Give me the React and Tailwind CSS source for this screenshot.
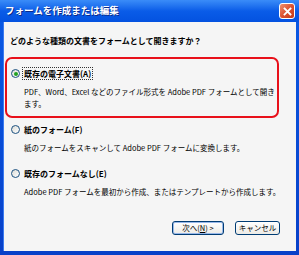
import React from 'react';

const font = { fontFamily: '"Noto Sans CJK JP", "Noto Sans", sans-serif' };

const Radio = ({ checked }) => (
  <span className="relative flex h-[9px] w-[9px] shrink-0 items-center justify-center rounded-full border border-[#1c5180] bg-gradient-to-br from-[#dcdcd6] to-white">
    {checked && <span className="h-[4px] w-[4px] rounded-full bg-[#21a121]" />}
  </span>
);

const Option = ({ label, desc, checked, focus }) => (
  <div className="flex flex-col">
    <div className="flex items-center gap-[3px]">
      <Radio checked={checked} />
      <span
        className={
          'text-[8px] font-bold leading-[11px] text-black px-[1px] ' +
          (focus ? 'outline outline-1 outline-dotted outline-[#333]' : '')
        }
      >
        {label}
      </span>
    </div>
    <div className="mt-[7px] pl-[13px] pr-[1px] text-[7.5px] leading-[12px] text-black">{desc}</div>
  </div>
);

const App = () => {
  return (
    <div style={font} className="flex h-[255px] w-[299px] flex-col bg-gradient-to-b from-[#0a5ae6] to-[#0840c8]">
      {/* title bar */}
      <div className="flex h-[22px] shrink-0 items-center justify-between bg-gradient-to-b from-[#3a8cf8] via-[#0a5ce8] to-[#0452e0] pl-[5px] pr-[4px]">
        <span className="text-[9.5px] font-bold leading-none text-white [text-shadow:1px_1px_0_#0a2a8a]">
          フォームを作成または編集
        </span>
        <div className="flex h-[16px] w-[16px] items-center justify-center rounded-[3px] border border-white bg-gradient-to-br from-[#ef9070] via-[#dc5230] to-[#c23a18]">
          <svg width="9" height="9" viewBox="0 0 9 9">
            <path d="M1.5 1.5 L7.5 7.5 M7.5 1.5 L1.5 7.5" stroke="white" strokeWidth="1.8" strokeLinecap="square" />
          </svg>
        </div>
      </div>

      {/* body */}
      <div className="mx-[3px] mb-[4px] flex flex-1 flex-col border-l border-[#3a7af0] bg-[#f5f5f5] pl-[1px] pr-[4px]">
        <div className="pl-[5px] pt-[13px] text-[8px] font-bold leading-[11px] text-black">
          どのような種類の文書をフォームとして開きますか？
        </div>

        <div className="mt-[11px] mr-[13px] rounded-[7px] border-2 border-[#e8101a] pb-[6px] pl-[4px] pt-[9px]">
          <Option
            checked
            focus
            label="既存の電子文書(A)"
            desc="PDF、Word、Excel などのファイル形式を Adobe PDF フォームとして開きます。"
          />
        </div>

        <div className="mt-[6px] pl-[6px]">
          <Option
            label="紙のフォーム(F)"
            desc="紙のフォームをスキャンして Adobe PDF フォームに変換します。"
          />
        </div>

        <div className="mt-[14px] pl-[6px]">
          <Option
            label="既存のフォームなし(E)"
            desc="Adobe PDF フォームを最初から作成、またはテンプレートから作成します。"
          />
        </div>

        <div className="mt-auto mb-[16px] flex justify-end gap-[11px] pr-[12px]">
          <button className="flex h-[14px] w-[52px] items-center justify-center rounded-[3px] border border-[#003c74] bg-gradient-to-b from-white to-[#ecebe6] text-[7.5px] leading-none text-black shadow-[inset_0_0_0_1px_#98b8ea]">
            次へ(<span className="underline">N</span>) &gt;
          </button>
          <button className="flex h-[14px] w-[45px] items-center justify-center rounded-[3px] border border-[#003c74] bg-gradient-to-b from-white to-[#ecebe6] text-[7.5px] leading-none text-black">
            キャンセル
          </button>
        </div>
      </div>
    </div>
  );
};

export default App;
